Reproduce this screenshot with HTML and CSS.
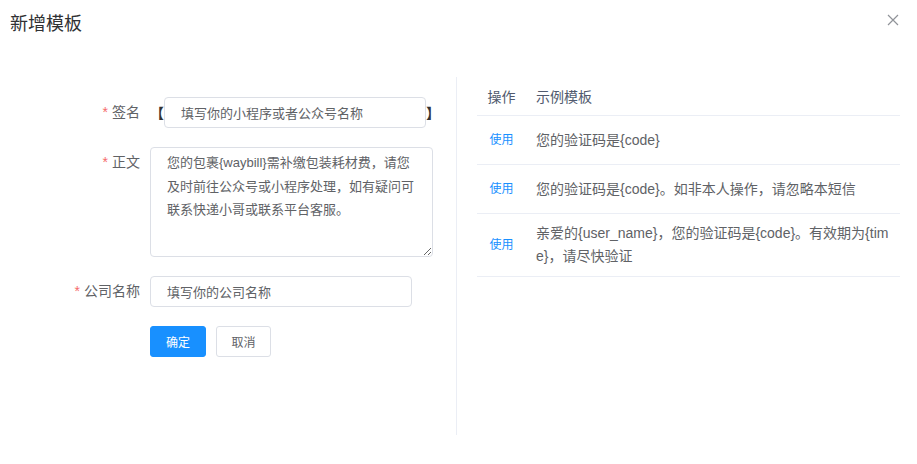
FILE: index.html
```html
<!DOCTYPE html>
<html lang="zh-CN">
<head>
<meta charset="utf-8">
<title>新增模板</title>
<link rel="stylesheet" href="styles.css">
</head>
<body>
<div class="dialog">
  <header class="dialog-header">
    <h2 class="dialog-title">新增模板</h2>
    <button class="dialog-close" type="button" aria-label="关闭">
      <svg width="12" height="12" viewBox="0 0 12 12"><path d="M1 1L11 11M11 1L1 11" stroke="#909399" stroke-width="1.2" fill="none"/></svg>
    </button>
  </header>
  <div class="dialog-body">
    <form class="form">
      <div class="form-row">
        <label class="form-label"><span class="req">*</span>签名</label>
        <div class="form-control sign-control">
          <span class="bracket bracket-left">【</span>
          <input class="input input-sign" type="text" value="填写你的小程序或者公众号名称">
          <span class="bracket bracket-right">】</span>
        </div>
      </div>
      <div class="form-row">
        <label class="form-label"><span class="req">*</span>正文</label>
        <div class="form-control">
          <textarea class="textarea">您的包裹{waybill}需补缴包装耗材费，请您及时前往公众号或小程序处理，如有疑问可联系快递小哥或联系平台客服。</textarea>
        </div>
      </div>
      <div class="form-row">
        <label class="form-label"><span class="req">*</span>公司名称</label>
        <div class="form-control">
          <input class="input input-company" type="text" value="填写你的公司名称">
        </div>
      </div>
      <div class="form-actions">
        <button class="btn btn-primary" type="button">确定</button>
        <button class="btn btn-default" type="button">取消</button>
      </div>
    </form>
    <div class="examples">
      <table class="table">
        <thead>
          <tr><th class="col-op">操作</th><th class="col-tpl">示例模板</th></tr>
        </thead>
        <tbody>
          <tr><td class="col-op"><a class="link">使用</a></td><td class="col-tpl">您的验证码是{code}</td></tr>
          <tr><td class="col-op"><a class="link">使用</a></td><td class="col-tpl">您的验证码是{code}。如非本人操作，请忽略本短信</td></tr>
          <tr><td class="col-op"><a class="link">使用</a></td><td class="col-tpl">亲爱的{user_name}，您的验证码是{code}。有效期为{time}，请尽快验证</td></tr>
        </tbody>
      </table>
    </div>
  </div>
</div>
</body>
</html>
```
FILE: styles.css
```css
html, body {
  margin: 0;
  padding: 0;
  background: #fff;
}
body {
  font-family: "Liberation Sans", "Noto Sans CJK SC", sans-serif;
  color: #606266;
  width: 917px;
  height: 464px;
  overflow: hidden;
}
.dialog {
  width: 917px;
  height: 464px;
  box-sizing: border-box;
}
.dialog-header {
  display: flex;
  justify-content: space-between;
  align-items: flex-start;
  height: 77px;
  box-sizing: border-box;
  padding: 12px 18px 0 10px;
}
.dialog-title {
  margin: 0;
  font-size: 18px;
  font-weight: normal;
  line-height: 24px;
  color: #303133;
}
.dialog-close {
  border: 0;
  background: transparent;
  padding: 0;
  margin-top: 2px;
  width: 12px;
  height: 12px;
  display: flex;
  cursor: pointer;
}
.dialog-body {
  display: flex;
  height: 358px;
}
.form {
  width: 456px;
  padding-top: 20px;
  box-sizing: border-box;
}
.form-row {
  display: flex;
  margin-bottom: 19px;
}
.form-label {
  width: 150px;
  padding-right: 10px;
  box-sizing: border-box;
  text-align: right;
  font-size: 14px;
  line-height: 31px;
  color: #606266;
}
.req {
  color: #f56c6c;
  margin-right: 4px;
}
.form-control {
  display: flex;
  align-items: center;
}
.bracket {
  font-family: "Noto Sans CJK SC", sans-serif;
  font-size: 14px;
  font-weight: bold;
  color: #333;
  width: 14px;
  line-height: 31px;
}
.bracket-left { text-align: right; }
.bracket-right { text-align: left; }
.input {
  font-family: inherit;
  font-size: 13px;
  color: #606266;
  height: 31px;
  box-sizing: border-box;
  border: 1px solid #dcdfe6;
  border-radius: 4px;
  padding: 0 16px;
  outline: none;
  background: #fff;
}
.input-sign {
  width: 262px;
}
.input-company {
  width: 262px;
}
.textarea {
  font-family: inherit;
  font-size: 13px;
  line-height: 23.5px;
  color: #606266;
  width: 283px;
  height: 110px;
  box-sizing: border-box;
  border: 1px solid #dcdfe6;
  border-radius: 4px;
  padding: 3px 10px 1px 16px;
  outline: none;
  display: block;
}
.form-actions {
  display: flex;
  gap: 10px;
  padding-left: 150px;
}
.btn {
  font-family: inherit;
  font-size: 12px;
  height: 31px;
  border-radius: 3px;
  box-sizing: border-box;
  padding: 0;
  cursor: pointer;
}
.btn-primary {
  width: 56px;
  background: #1890ff;
  border: 1px solid #1890ff;
  color: #fff;
}
.btn-default {
  width: 55px;
  background: #fff;
  border: 1px solid #dcdfe6;
  color: #606266;
}
.examples {
  flex: 1;
  border-left: 1px solid #ebeef5;
  padding: 0 17px 0 20px;
}
.table {
  width: 100%;
  border-collapse: collapse;
  table-layout: fixed;
  font-size: 14px;
  color: #606266;
}
.table th {
  font-weight: normal;
  height: 38px;
  padding: 0;
  text-align: left;
  border-bottom: 1px solid #ebeef5;
  vertical-align: middle;
  color: #515a6e;
}
.table td {
  padding: 8px 0;
  height: 32px;
  line-height: 23px;
  border-bottom: 1px solid #ebeef5;
  vertical-align: middle;
}
.col-op {
  width: 49px;
  text-align: center !important;
}
.table .col-tpl {
  padding-left: 10px;
  padding-right: 8px;
  word-break: break-all;
}
.link {
  color: #1890ff;
  font-size: 12px;
  cursor: pointer;
}
```
